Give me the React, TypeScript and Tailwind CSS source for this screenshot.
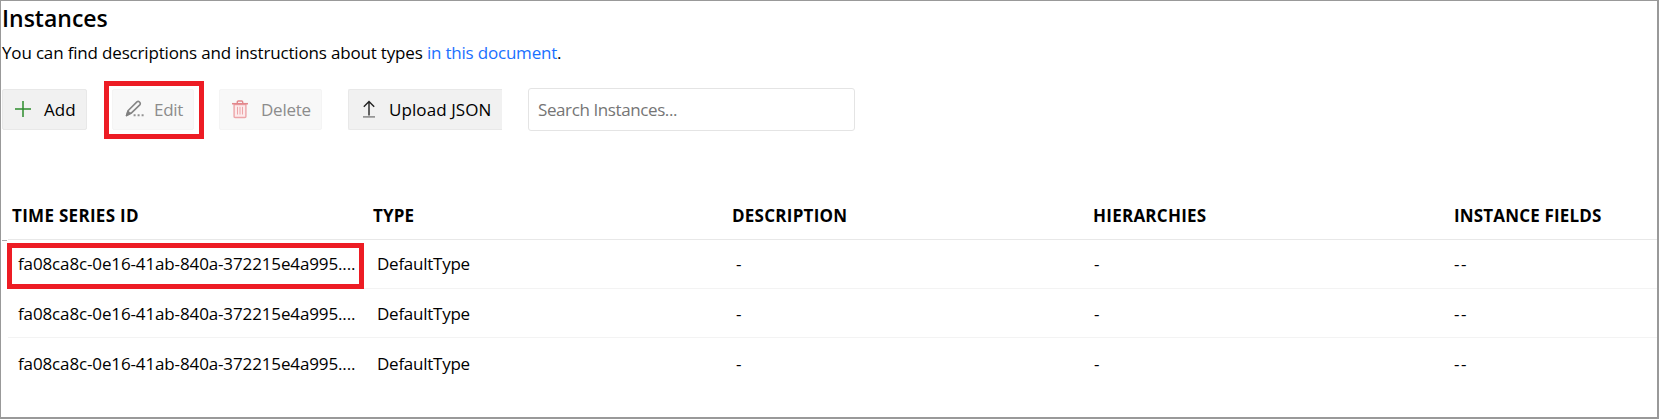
import type { ReactNode } from "react";

const COLS = "grid grid-cols-[362px_362px_361px_360px_1fr] items-center";

const rows = [
  { id: "fa08ca8c-0e16-41ab-840a-372215e4a995....", selected: true, height: "h-[49px] border-b" },
  { id: "fa08ca8c-0e16-41ab-840a-372215e4a995....", selected: false, height: "h-[49px] border-b pt-px" },
  { id: "fa08ca8c-0e16-41ab-840a-372215e4a995....", selected: false, height: "h-[51px]" },
];

function PlusIcon() {
  return (
    <svg width="18" height="18" viewBox="0 0 18 18" fill="none" className="mb-[2px] shrink-0">
      <path d="M9 1v16M1 9h16" stroke="#2c8c2c" strokeWidth="1.5" />
    </svg>
  );
}

function PencilIcon() {
  return (
    <svg width="20" height="18" viewBox="0 0 20 18" fill="none" className="mb-[2px] shrink-0">
      <path d="M3 10.8 11.9 1.9c1.6-1.4 4.4.7 2.9 2.9L6 13.3l-4.4 2.3z" stroke="#858585" strokeWidth="1.6" strokeLinejoin="round" />
      <path d="M2.8 11 6 13.3l-5 2.7z" fill="#808080" stroke="#808080" strokeWidth=".8" />
      <path d="M8.6 15.3h2M12.6 15.3h2M16.6 15.3h2" stroke="#939393" strokeWidth="2" />
    </svg>
  );
}

function TrashIcon() {
  return (
    <svg width="16" height="19" viewBox="0 0 16 19" fill="none" className="mb-px shrink-0">
      <path d="M2.1 4.5h11.8v12q0 1-1 1H3.1q-1 0-1-1z" fill="#fcebec" stroke="#eda4a8" strokeWidth="1.4" />
      <path d="M0 3.7h16" stroke="#e2878c" strokeWidth="1.5" />
      <path d="M5.3 3V2q0-1 1-1h3.4q1 0 1 1v1" stroke="#e2878c" strokeWidth="1.4" />
      <path d="M5.5 6.8v7.7M8 6.8v7.7M10.5 6.8v7.7" stroke="#eda4a8" strokeWidth="1" />
    </svg>
  );
}

function UploadIcon() {
  return (
    <svg width="12" height="18" viewBox="0 0 12 18" fill="none" className="mb-px shrink-0">
      <path d="M6 15.4V1.8M.8 6.8 6 1.6l5.2 5.2" stroke="#222" strokeWidth="1.4" />
      <path d="M0 16.9h12" stroke="#808080" strokeWidth="1.4" />
    </svg>
  );
}

function ToolButton({ className, disabled, children }: { className: string; disabled?: boolean; children: ReactNode }) {
  return (
    <button
      disabled={disabled}
      className={`flex h-[41px] items-center whitespace-nowrap rounded-[2px] border ${
        disabled ? "border-[#f4f4f4] bg-[#f8f8f8] text-[#8c8c8c]" : "border-[#e8e8e8] bg-[#f1f1f1] text-black"
      } ${className}`}
    >
      {children}
    </button>
  );
}

export default function App() {
  return (
    <div className="flex h-[419px] w-[1659px] flex-col overflow-hidden border-t border-r-2 border-b-2 border-l border-[#999] bg-white font-['Open_Sans',sans-serif] text-[17px] text-black">
      <h1 className="h-[34px] pl-[1px] text-[23px] leading-[34px] font-semibold">Instances</h1>
      <p className="h-9 pl-[1px] leading-9 tracking-[-0.17px]">
        You can find descriptions and instructions about types{" "}
        <a className="tracking-[-0.2px] text-[#1a70ff]">in this document</a>.
      </p>

      <div className="mt-[10px] flex h-[58px] shrink-0 items-start pl-[1px]">
        <ToolButton className="mt-2 w-[85px] pl-[11px]">
          <PlusIcon />
          <span className="ml-[12px] tracking-[0.1px]">Add</span>
        </ToolButton>
        <div className="ml-[17px] flex h-[58px] w-[100px] items-start border-[5px] border-[#ed1c24] pt-[3px] pl-[3px]">
          <ToolButton disabled className="w-[82px] pl-[12px]">
            <PencilIcon />
            <span className="ml-[9px] tracking-[-0.3px]">Edit</span>
          </ToolButton>
        </div>
        <ToolButton disabled className="mt-2 ml-[15px] w-[103px] pl-[12px]">
          <TrashIcon />
          <span className="ml-[13px] tracking-[-0.25px]">Delete</span>
        </ToolButton>
        <ToolButton className="mt-2 ml-[26px] w-[154px] rounded-r-none border-r-0 pl-[14px]">
          <UploadIcon />
          <span className="ml-[14px] tracking-[0.08px]">Upload JSON</span>
        </ToolButton>
        <input
          placeholder="Search Instances..."
          className="mt-[7px] ml-[26px] h-[43px] w-[327px] rounded-[3px] border border-[#e4e4e4] pl-[9px] tracking-[-0.399px] outline-none placeholder:text-[#757575]"
        />
      </div>

      <div className="mt-[53px] flex">
        <div className="mt-12 ml-[1px] h-px w-[5px] shrink-0 bg-[#aaa]" />
        <div className="ml-[1px] grow">
          <div className={`${COLS} h-12 border-b border-[#e8e8e8] pt-px font-bold`}>
            <div className="pl-1 tracking-[0.3px]">TIME SERIES ID</div>
            <div className="pl-[3px] tracking-[0.12px]">TYPE</div>
            <div className="tracking-[0.25px]">DESCRIPTION</div>
            <div className="tracking-[0.25px]">HIERARCHIES</div>
            <div className="pl-px tracking-[0.168px]">INSTANCE FIELDS</div>
          </div>
          {rows.map((row, i) => (
            <div key={i} className={`${COLS} relative border-[#f3f3f3] ${row.height}`}>
              <div className="pl-[10px] tracking-[-0.132px]">{row.id}</div>
              <div className="pl-[7px] tracking-[-0.25px]">DefaultType</div>
              <div className="pl-1">-</div>
              <div className="pl-[1px]">-</div>
              <div className="pl-[1px] tracking-[1.5px]">--</div>
              {row.selected && (
                <div className="absolute top-[3px] -left-px h-[46px] w-[357px] border-[5px] border-[#ed1c24]" />
              )}
            </div>
          ))}
        </div>
      </div>
    </div>
  );
}
